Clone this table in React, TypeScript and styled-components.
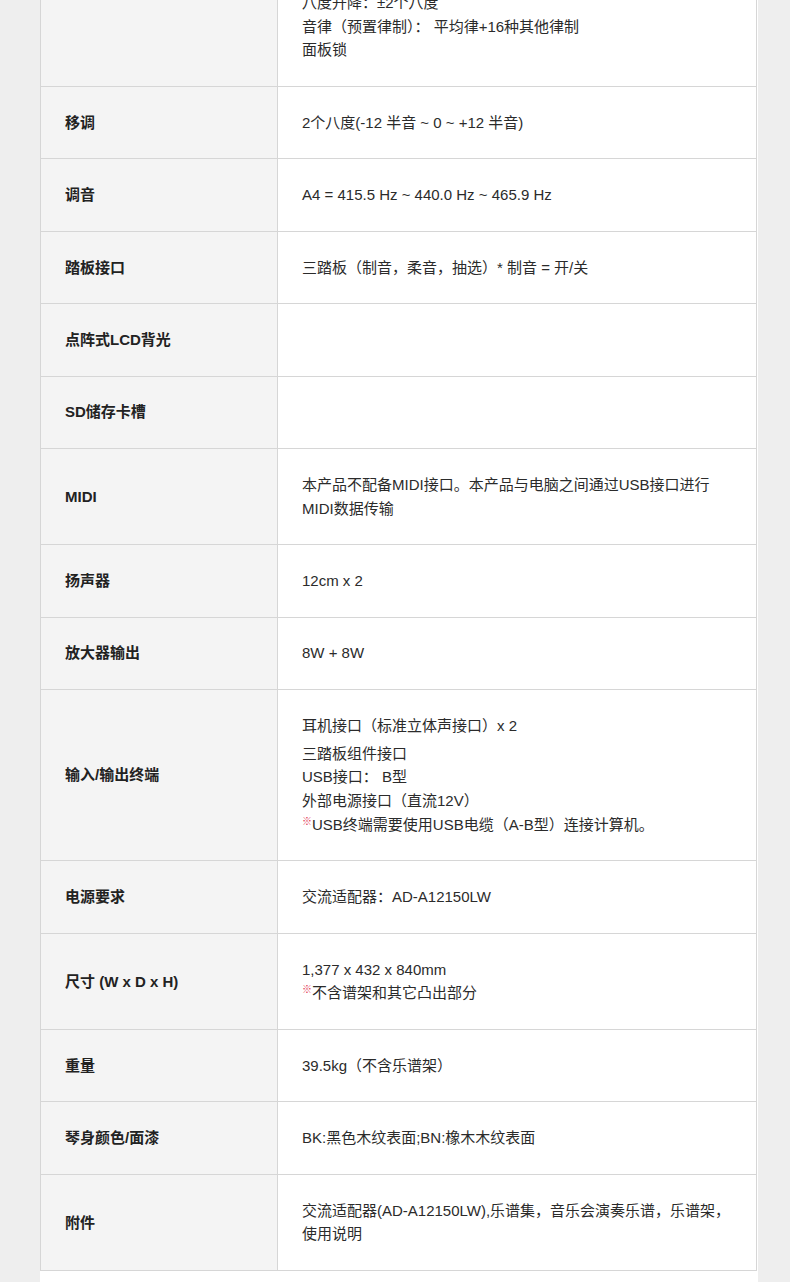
import React from "react";
import styled, { createGlobalStyle } from "styled-components";

const GlobalStyle = createGlobalStyle`
  html, body {
    margin: 0;
    padding: 0;
    background: #eeeeee;
  }
  body {
    font-family: "Liberation Sans", "Noto Sans CJK SC", sans-serif;
    font-size: 15px;
  }
`;

const Page = styled.div`
  width: 718px;
  margin-left: 40px;
  background: #ffffff;
  overflow: hidden;
  padding-bottom: 40px;
`;

const SpecTable = styled.div`
  width: 717px;
  margin-top: -33px;
  border-left: 1px solid #d6d6d6;
  border-right: 1px solid #d6d6d6;
  box-sizing: border-box;
`;

const Row = styled.div`
  display: grid;
  grid-template-columns: 237px 1fr;
  border-bottom: 1px solid #d6d6d6;
`;

const Label = styled.div`
  display: flex;
  align-items: center;
  background: #f4f4f4;
  border-right: 1px solid #d6d6d6;
  padding: 0 24px;
  font-weight: bold;
  color: #222222;
  line-height: 23.8px;
`;

const Value = styled.div`
  padding: 23.8px 24px;
  color: #2b2b2b;
  line-height: 23.8px;
  display: flex;
  flex-direction: column;
  justify-content: center;
`;

const Line = styled.div<{ $gap?: number }>`
  white-space: nowrap;
  margin-bottom: ${(p) => (p.$gap ? `${p.$gap}px` : "0")};
`;

const Mark = styled.span`
  font-size: 10px;
  line-height: 1;
  vertical-align: 5px;
  color: #e2344f;
`;

type Spec = {
  label: string;
  lines: React.ReactNode[];
  firstGap?: number;
};

const specs: Spec[] = [
  {
    label: "",
    lines: [
      "八度升降：±2个八度",
      "音律（预置律制）： 平均律+16种其他律制",
      "面板锁",
    ],
  },
  { label: "移调", lines: ["2个八度(-12 半音 ~ 0 ~ +12 半音)"] },
  { label: "调音", lines: ["A4 = 415.5 Hz ~ 440.0 Hz ~ 465.9 Hz"] },
  { label: "踏板接口", lines: ["三踏板（制音，柔音，抽选）* 制音 = 开/关"] },
  { label: "点阵式LCD背光", lines: [""] },
  { label: "SD储存卡槽", lines: [""] },
  {
    label: "MIDI",
    lines: [
      "本产品不配备MIDI接口。本产品与电脑之间通过USB接口进行",
      "MIDI数据传输",
    ],
  },
  { label: "扬声器", lines: ["12cm x 2"] },
  { label: "放大器输出", lines: ["8W + 8W"] },
  {
    label: "输入/输出终端",
    firstGap: 4,
    lines: [
      "耳机接口（标准立体声接口）x 2",
      "三踏板组件接口",
      "USB接口： B型",
      "外部电源接口（直流12V）",
      <>
        <Mark>※</Mark>USB终端需要使用USB电缆（A-B型）连接计算机。
      </>,
    ],
  },
  { label: "电源要求", lines: ["交流适配器：AD-A12150LW"] },
  {
    label: "尺寸 (W x D x H)",
    lines: [
      "1,377 x 432 x 840mm",
      <>
        <Mark>※</Mark>不含谱架和其它凸出部分
      </>,
    ],
  },
  { label: "重量", lines: ["39.5kg（不含乐谱架）"] },
  { label: "琴身颜色/面漆", lines: ["BK:黑色木纹表面;BN:橡木木纹表面"] },
  {
    label: "附件",
    lines: [
      "交流适配器(AD-A12150LW),乐谱集，音乐会演奏乐谱，乐谱架，",
      "使用说明",
    ],
  },
];

export default function App() {
  return (
    <>
      <GlobalStyle />
      <Page>
        <SpecTable>
          {specs.map((s, i) => (
            <Row key={i}>
              <Label>{s.label}</Label>
              <Value>
                {s.lines.map((l, j) => (
                  <Line key={j} $gap={j === 0 ? s.firstGap : undefined}>
                    {l === "" ? "\u00a0" : l}
                  </Line>
                ))}
              </Value>
            </Row>
          ))}
        </SpecTable>
      </Page>
    </>
  );
}
